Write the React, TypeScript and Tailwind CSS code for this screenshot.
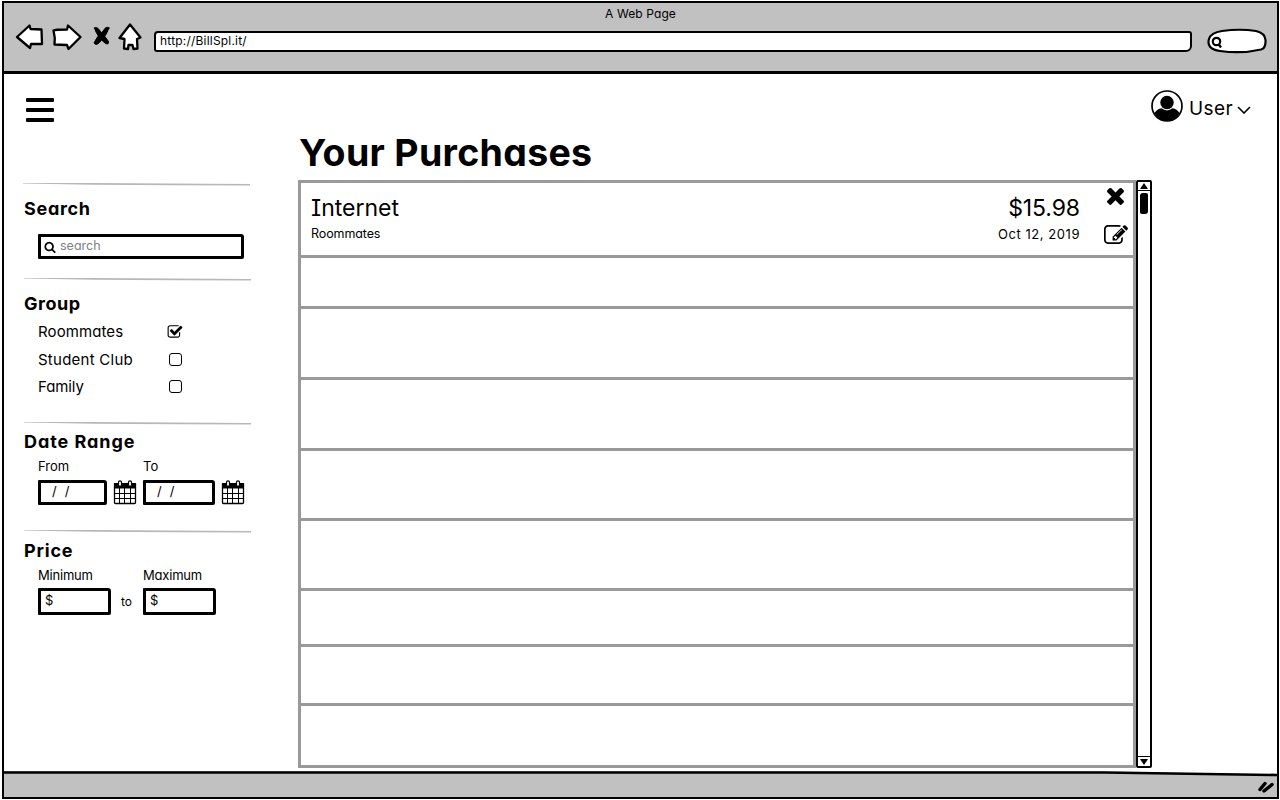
import React from "react";

const FONT =
  "font-['Inter',sans-serif] [font-feature-settings:'cv11','cv08'] whitespace-nowrap text-black";

function Glyph({ d, className, box = "0 0 1792 1792" }: { d: string; className: string; box?: string }) {
  return (
    <svg viewBox={box} className={className} fill="currentColor">
      <path d={d} />
    </svg>
  );
}

const SEARCH =
  "M1216 832q0-185-131.5-316.5t-316.5-131.5-316.5 131.5-131.5 316.5 131.5 316.5 316.5 131.5 316.5-131.5 131.5-316.5zm512 832q0 52-38 90t-90 38q-54 0-90-38l-343-342q-179 124-399 124-143 0-273.5-55.5t-225-150-150-225-55.5-273.5 55.5-273.5 150-225 225-150 273.5-55.5 273.5 55.5 225 150 150 225 55.5 273.5q0 220-124 399l343 343q37 37 37 90z";
const TIMES =
  "M1490 1322q0 40-28 68l-136 136q-28 28-68 28t-68-28l-294-294-294 294q-28 28-68 28t-68-28l-136-136q-28-28-28-68t28-68l294-294-294-294q-28-28-28-68t28-68l136-136q28-28 68-28t68 28l294 294 294-294q28-28 68-28t68 28l136 136q28 28 28 68t-28 68l-294 294 294 294q28 28 28 68z";
const EDIT =
  "M888 1184l116-116-152-152-116 116v56h96v96h56zm440-720q-16-16-33 1l-350 350q-17 17-1 33t33-1l350-350q17-17 1-33zm80 594v190q0 119-84.5 203.5t-203.5 84.5h-832q-119 0-203.5-84.5t-84.5-203.5v-832q0-119 84.5-203.5t203.5-84.5h832q63 0 117 25 15 7 18 23 3 17-9 29l-49 49q-14 14-32 8-23-6-45-6h-832q-66 0-113 47t-47 113v832q0 66 47 113t113 47h832q66 0 113-47t47-113v-126q0-13 9-22l64-64q15-15 35-7t20 29zm-96-738l288 288-672 672h-288v-288zm444 132l-92 92-288-288 92-92q28-28 68-28t68 28l152 152q28 28 28 68t-28 68z";
const CHECKED =
  "M1472 930v318q0 119-84.5 203.5t-203.5 84.5h-832q-119 0-203.5-84.5t-84.5-203.5v-832q0-119 84.5-203.5t203.5-84.5h832q63 0 117 25 15 7 18 23 3 17-9 29l-49 49q-10 10-23 10-3 0-9-2-23-6-45-6h-832q-66 0-113 47t-47 113v832q0 66 47 113t113 47h832q66 0 113-47t47-113v-254q0-13 9-22l64-64q10-10 23-10 6 0 12 3 20 8 20 29zm231-489l-814 814q-24 24-57 24t-57-24l-430-430q-24-24-24-57t24-57l110-110q24-24 57-24t57 24l263 263 647-647q24-24 57-24t57 24l110 110q24 24 24 57t-24 57z";

function NavIcons() {
  return (
    <svg
      viewBox="0 0 130 34"
      className="mt-[17px] ml-[11px] h-[34px] w-[130px] shrink-0"
      fill="#fff"
      stroke="#000"
      strokeWidth="2.3"
      strokeLinejoin="round"
      strokeLinecap="round"
    >
      <path d="M2 17 L14.500 5.500 L15.500 9 L26.500 9.500 L27 24 L16 24 L15 28 Z" />
      <path d="M38.500 10.500 Q40 9.500 52 9.500 L53 5.500 L65.500 17 L53.500 29 L52 25 L39.500 24.500 Q40.500 18 38.500 10.500 Z" />
      <g fill="#000" strokeWidth="1">
        <path d="M79.500 8 Q82 6 85.500 11.500 Q91 17.500 93.500 21.500 Q94 25 90.500 23.500 Q82 17 79.500 8 Z" />
        <path d="M94 8 Q91 5.500 88.500 10.500 Q81 17.500 79 23 Q81 26 84.500 22.500 Q92 15 94 8 Z" />
      </g>
      <path d="M115 4.500 L125.500 17.500 L122 19 L122.500 28.500 L118.500 29 L117.500 25 L113.500 25 L113 29 L109 28.500 L109.500 19 L104.500 18 Z" />
    </svg>
  );
}

function Divider() {
  return (
    <svg viewBox="0 0 228 4" className="block h-1 w-[228px] shrink-0" fill="#b8b8b8">
      <path d="M0 -0.500 L70 0 L227 1 L227 2.500 L150 2.300 L70 1.700 L0 0.600 Z" />
    </svg>
  );
}

function Calendar() {
  return (
    <svg viewBox="0 0 24 26" className="h-[26px] w-6 shrink-0" fill="none" stroke="#000">
      <path d="M1.500 5 H22.500 V23.500 Q22.500 24.500 21.500 24.500 H2.500 Q1.500 24.500 1.500 23.500 Z" fill="#fff" strokeWidth="1.300" />
      <path d="M1 5 Q1 4 2 4 H22 Q23 4 23 5 V9.500 H1 Z" fill="#000" stroke="none" />
      <path d="M6.500 9 V24 M11.500 9 V24 M17.500 9 V24 M1.500 14.500 H22.500 M1.500 19.500 H22.500" strokeWidth="1" />
      <rect x="5.500" y="1.800" width="3" height="5.500" rx="1.500" fill="#fff" strokeWidth="1.200" />
      <rect x="15.500" y="1.800" width="3" height="5.500" rx="1.500" fill="#fff" strokeWidth="1.200" />
    </svg>
  );
}

function Title({ children, className }: { children: React.ReactNode; className: string }) {
  return <h2 className={`h-5 shrink-0 pl-px text-[18px] leading-5 font-bold ${className}`}>{children}</h2>;
}

function Field({ children, className }: { children?: React.ReactNode; className: string }) {
  return (
    <div
      className={`flex shrink-0 items-center rounded-[1px_3px_2px_1px] border-[3px] border-black bg-white ${className}`}
    >
      {children}
    </div>
  );
}

const ROWS = [
  "h-[51px]",
  "h-[71px]",
  "h-[71px]",
  "h-[70px]",
  "h-[70px]",
  "h-[56px]",
  "h-[59px]",
  "h-[62px]",
];

function Sidebar() {
  return (
    <aside className="flex w-[275px] shrink-0 flex-col pt-[51px]">
      <Divider />
      <Title className="mt-3 tracking-[0.7px]">Search</Title>
      <Field className="mt-[15px] ml-[15px] h-[25px] w-[206px] pl-[3px]">
        <Glyph d={SEARCH} className="h-3 w-3" />
        <span className="ml-1 -mt-0.5 text-[12.5px] leading-4 text-[#808088]">search</span>
      </Field>
      <div className="mt-[19px] ml-px flex"><Divider /></div>
      <Title className="mt-3 tracking-[0.5px]">Group</Title>
      <ul className="mt-1 ml-[15px] w-[146px] text-[15px]">
        <li className="flex h-7 items-center justify-between">
          <span className="tracking-[0.1px]">Roommates</span>
          <Glyph d={CHECKED} className="mr-px h-4 w-4" />
        </li>
        <li className="flex h-7 items-center justify-between">
          <span className="tracking-[0.25px]">Student Club</span>
          <span className="mr-0.5 mb-px h-[13px] w-[13px] rounded-[3px] border border-black" />
        </li>
        <li className="flex h-[27px] items-center justify-between">
          <span className="tracking-[-0.1px]">Family</span>
          <span className="mr-0.5 mb-0.5 h-[13px] w-[13px] rounded-[3px] border border-black" />
        </li>
      </ul>
      <div className="mt-[21px] ml-px flex"><Divider /></div>
      <Title className="mt-1.5 tracking-[0.95px]">Date Range</Title>
      <div className="mt-1 ml-[15px] flex h-5 text-[13px] leading-5">
        <span className="w-[105px]">From</span>
        <span>To</span>
      </div>
      <div className="mt-[3px] ml-[15px] flex items-center text-[13px]">
        <Field className="h-[25px] w-[69px] gap-2 pl-[11px]">
          <span>/</span>
          <span>/</span>
        </Field>
        <div className="ml-[6px] flex"><Calendar /></div>
        <Field className="ml-[6px] h-[25px] w-[72px] gap-2 pl-[11px]">
          <span>/</span>
          <span>/</span>
        </Field>
        <div className="ml-[6px] flex"><Calendar /></div>
      </div>
      <div className="mt-[25px] ml-px flex"><Divider /></div>
      <Title className="mt-[7px] tracking-[0.8px]">Price</Title>
      <div className="mt-1 ml-[15px] flex h-5 text-[13px] leading-5 tracking-[-0.2px]">
        <span className="w-[105px]">Minimum</span>
        <span>Maximum</span>
      </div>
      <div className="mt-[3px] ml-[15px] flex items-center">
        <Field className="h-[27px] w-[73px] pb-px pl-1 text-[13px]">$</Field>
        <span className="w-8 pr-px text-center text-[12px]">to</span>
        <Field className="h-[27px] w-[73px] pb-px pl-1 text-[13px]">$</Field>
      </div>
    </aside>
  );
}

export default function App() {
  return (
    <div className={`h-[800px] w-[1280px] overflow-hidden bg-white pt-px pl-[2px] ${FONT}`}>
      <div className="flex h-[798px] w-[1277px] flex-col border-[2.5px] border-black">
        <header className="flex h-[71px] shrink-0 flex-col border-b-[3px] border-black bg-[#c1c1c1]">
          <div className="flex h-0 justify-center">
            <span className="mt-[3px] h-4 text-[12px] leading-4 tracking-[0.1px]">A Web Page</span>
          </div>
          <div className="flex">
            <NavIcons />
            <div className="mt-7 ml-[9px] flex h-[21px] w-[1038px] items-center rounded-[4px_3px_6px_3px] border-2 border-black bg-white pb-px pl-1 text-[12px] tracking-[0.2px]">
              http://BillSpl.it/
            </div>
            <svg viewBox="0 0 62 28" className="mt-6 ml-[14px] h-7 w-[62px]" fill="#fff" stroke="#000" strokeWidth="2.200">
              <path d="M3 12 Q5 5.500 16 4 Q34 1.500 50 4 Q59 6 59.500 13 Q60 21 55 22.500 Q36 27 14 24 Q0 22 3 12 Z" />
              <circle cx="10.500" cy="14.500" r="3.700" />
              <path d="M12.500 17 L15 20.500" />
            </svg>
          </div>
        </header>

        <main className="flex h-[697px] shrink-0 flex-col bg-white">
          <div className="flex h-[58px] shrink-0 justify-between pr-[26px] pl-[22px]">
            <div className="mt-6 flex w-7 flex-col gap-1.5">
              <span className="h-1 rounded-[1px] bg-black" />
              <span className="h-1 rounded-[1px] bg-black" />
              <span className="h-1 rounded-[1px] bg-black" />
            </div>
            <div className="mt-4 flex h-8 items-center">
              <svg viewBox="0 0 32 32" className="h-8 w-8">
                <circle cx="16" cy="16" r="15" fill="#fff" stroke="#000" strokeWidth="1.700" />
                <ellipse cx="16" cy="12.500" rx="6.700" ry="6.800" />
                <path d="M3.500 23 Q6 19 10.500 18.300 Q16 22.500 21.500 18.300 Q26 19 28.500 23 Q24 31 16 31 Q8 31 3.500 23 Z" />
              </svg>
              <span className="mt-[5px] ml-1.5 w-[48px] text-[19px] leading-8 tracking-[0.4px]">User</span>
              <svg viewBox="0 0 14 8" className="mt-[7px] h-2 w-[14px]" fill="none" stroke="#000" strokeWidth="1.600">
                <path d="M1 1 L7 7 L13 1" />
              </svg>
            </div>
          </div>

          <div className="flex min-h-0 flex-1 pl-[19px]">
            <Sidebar />
            <section className="flex flex-col">
              <h1 className="h-12 shrink-0 pl-px text-[37.5px] leading-[42px] font-bold tracking-[0.3px]">
                Your Purchases
              </h1>
              <div className="flex">
                <ul className="w-[838px]">
                  <li className="flex h-[78px] border-[3px] border-[#999]">
                    <div className="flex flex-1 flex-col pl-[10px]">
                      <span className="mt-[13px] h-6 text-[23px] leading-6">Internet</span>
                      <span className="mt-[5px] h-[18px] text-[12.5px] leading-[18px] tracking-[-0.1px]">Roommates</span>
                    </div>
                    <div className="flex flex-col items-end">
                      <span className="mt-[13px] h-6 text-[23px] leading-6 tracking-[-0.1px]">$15.98</span>
                      <span className="mt-[5px] h-[18px] text-[13px] leading-[18px] tracking-[0.55px]">Oct 12, 2019</span>
                    </div>
                    <div className="flex w-[53px] flex-col items-center pl-[18px]">
                      <Glyph d={TIMES} box="302 302 1188 1252" className="mt-1 h-[18px] w-[17px]" />
                      <Glyph d={EDIT} box="0 128 1792 1408" className="mt-5 h-[19px] w-6" />
                    </div>
                  </li>
                  {ROWS.map((h, i) => (
                    <li key={i} className={`border-x-[3px] border-b-[3px] border-[#999] ${h}`} />
                  ))}
                </ul>
                <div className="flex h-[588px] w-4 flex-col rounded-[2px] border-2 border-black bg-white">
                  <div className="flex h-[9px] items-center justify-center border-b border-black">
                    <svg viewBox="0 0 8 6" className="h-1.5 w-2"><path d="M4 0 L8 6 L0 6 Z" /></svg>
                  </div>
                  <div className="mt-0.5 ml-0.5 h-[21px] w-2 rounded-[3px_2px_3px_2px] bg-black" />
                  <div className="flex-1" />
                  <div className="flex h-[10px] items-center justify-center border-t border-black">
                    <svg viewBox="0 0 8 6" className="h-1.5 w-2"><path d="M0 0 L8 0 L4 6 Z" /></svg>
                  </div>
                </div>
              </div>
            </section>
          </div>
        </main>

        <footer className="min-h-0 flex-1 bg-[#c1c1c1]">
          <svg viewBox="0 0 1273 25" className="h-[25px] w-full">
            <path d="M1080 0 H1273 V3.500 Z" fill="#fff" />
            <path d="M0 1.500 H1100 L1273 4" fill="none" stroke="#000" strokeWidth="2.600" />
            <path d="M1256 18.500 L1261 12.500 M1260 20 L1268 13.500" stroke="#000" strokeWidth="3.500" strokeLinecap="round" />
          </svg>
        </footer>
      </div>
    </div>
  );
}
